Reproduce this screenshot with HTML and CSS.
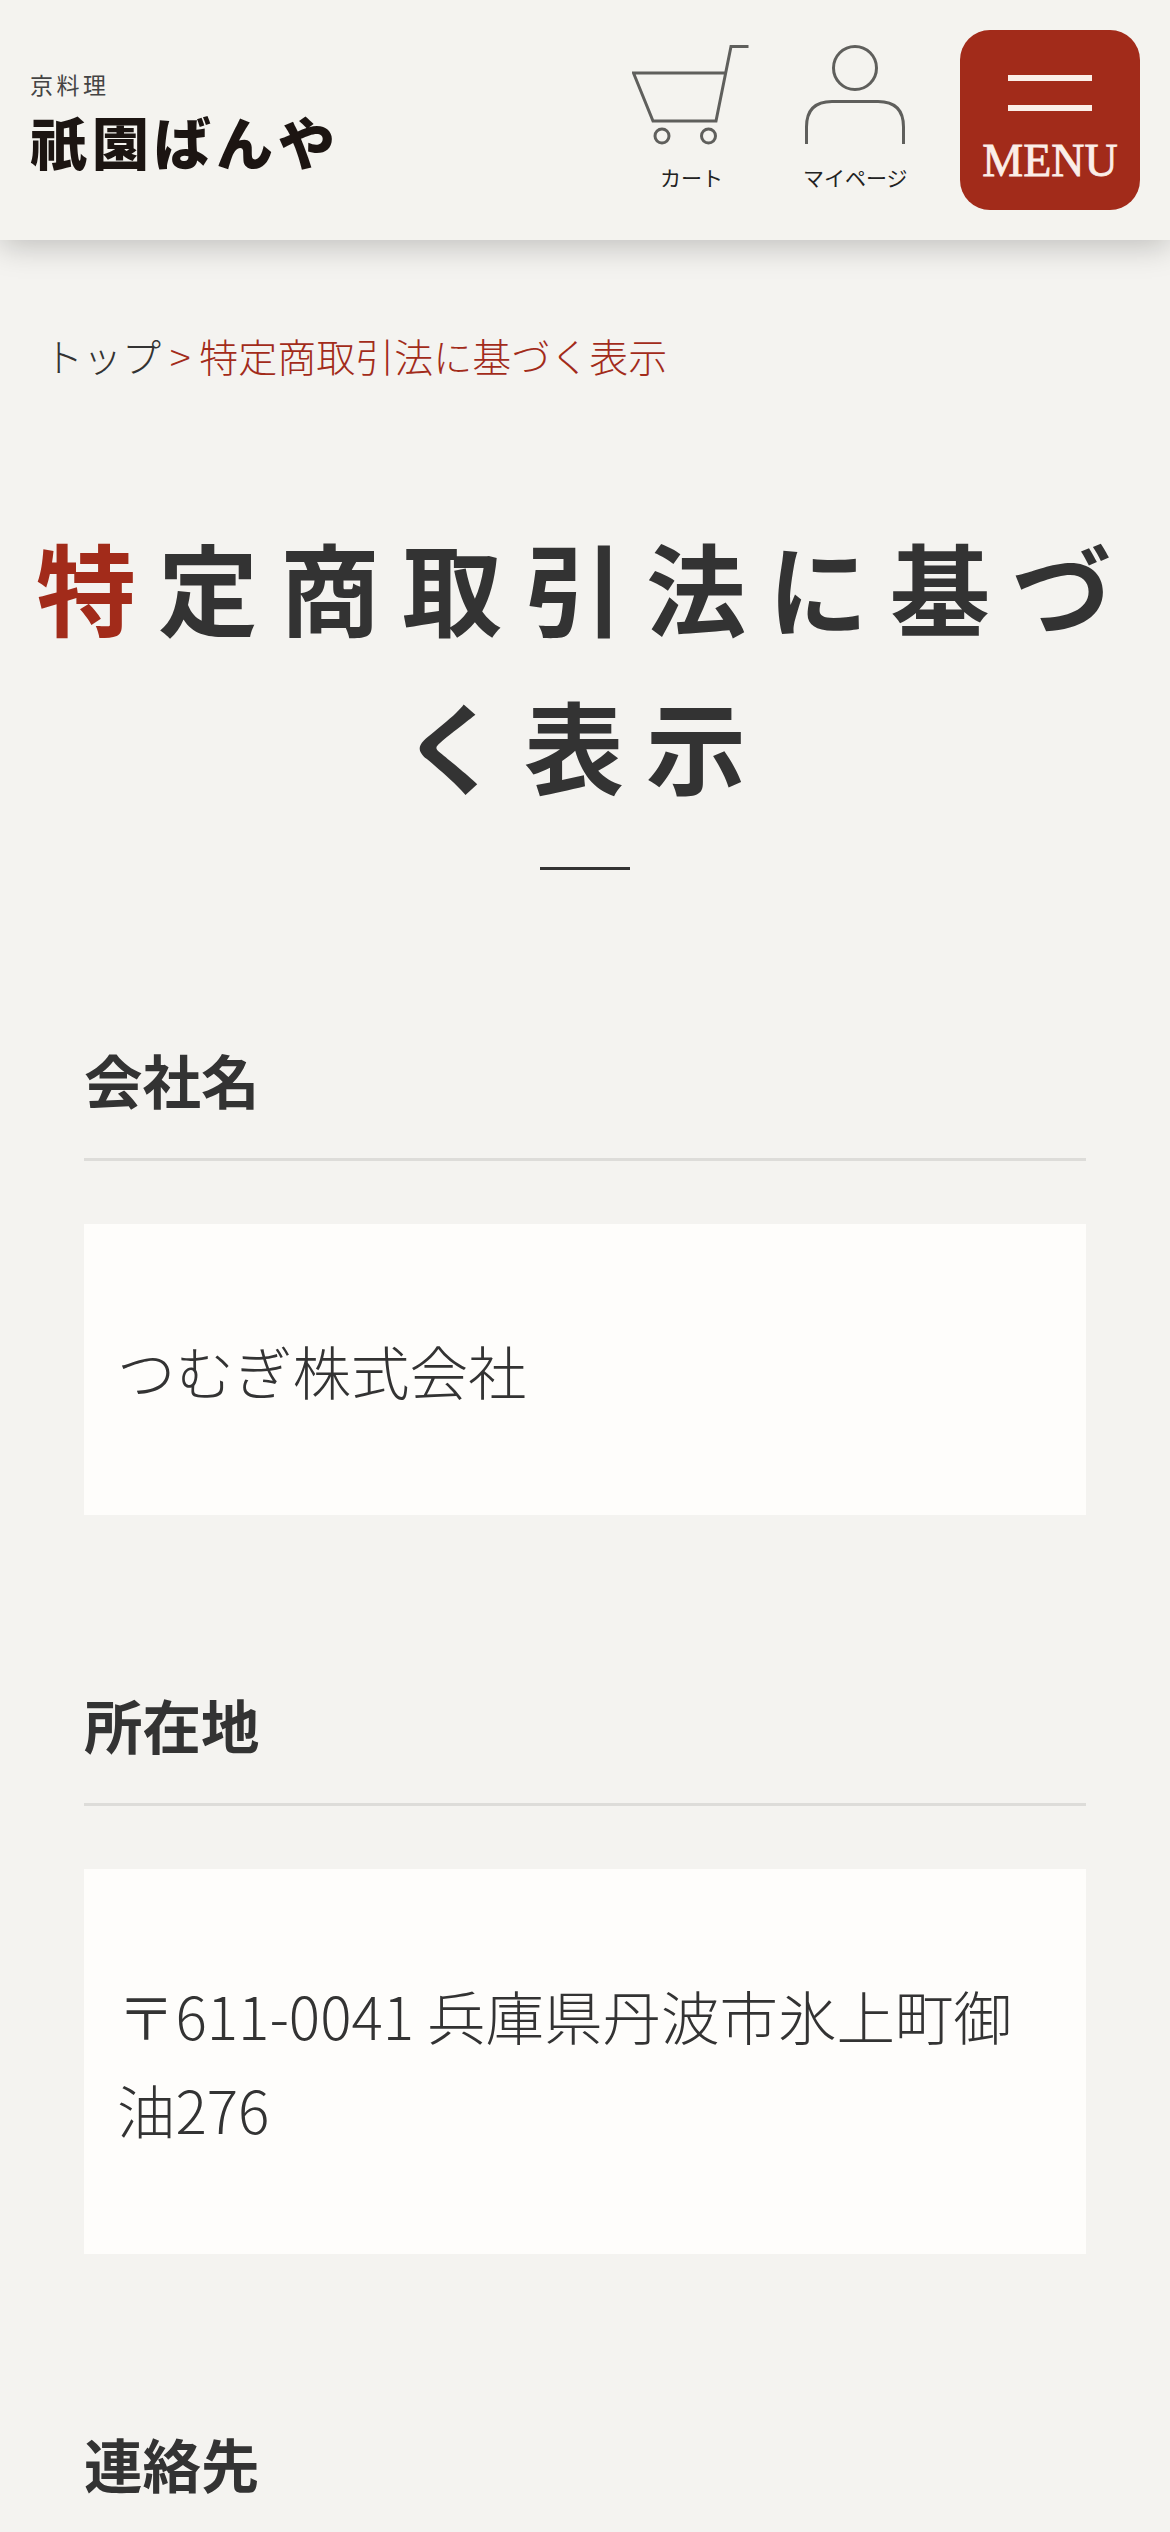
FILE: index.html
```html
<!DOCTYPE html>
<html lang="ja">
<head>
<meta charset="utf-8">
<title>特定商取引法に基づく表示</title>
<link rel="stylesheet" href="styles.css">
</head>
<body>
<header class="header">
  <a class="logo">
    <span class="logo-sub">京料理</span>
    <span class="logo-main">祇園ばんや</span>
  </a>
  <nav class="nav">
    <a class="nav-item">
      <svg class="nav-icon" width="118" height="100" viewBox="0 0 118 100" fill="none" stroke="#5f5f5c" stroke-width="3">
        <path d="M116.5 1.5H99L84 76H21L1.5 28H93"/>
        <circle cx="30" cy="91" r="7"/>
        <circle cx="76.5" cy="91" r="7"/>
      </svg>
      <span class="nav-label">カート</span>
    </a>
    <a class="nav-item">
      <svg class="nav-icon" width="102" height="100" viewBox="0 0 102 100" fill="none" stroke="#5f5f5c" stroke-width="3">
        <circle cx="51" cy="23" r="21.5"/>
        <path d="M2.5 99V82Q2.5 56.5 28 56.5H74Q99.5 56.5 99.5 82V99"/>
      </svg>
      <span class="nav-label">マイページ</span>
    </a>
    <a class="menu-btn">
      <span class="menu-bar"></span>
      <span class="menu-bar"></span>
      <span class="menu-text">MENU</span>
    </a>
  </nav>
</header>
<main>
  <p class="crumbs"><a class="crumb-top">トップ</a><span class="crumb-sep"> &gt; </span><span class="crumb-cur">特定商取引法に基づく表示</span></p>
  <h1 class="title"><span class="title-first">特</span>定商取引法に基づく表示</h1>
  <div class="title-rule"></div>
  <section class="sec">
    <h2 class="sec-head">会社名</h2>
    <div class="sec-body">つむぎ株式会社</div>
  </section>
  <section class="sec">
    <h2 class="sec-head">所在地</h2>
    <div class="sec-body">〒611-0041 兵庫県丹波市氷上町御油276</div>
  </section>
  <section class="sec">
    <h2 class="sec-head">連絡先</h2>
  </section>
</main>
</body>
</html>
```
FILE: styles.css
```css
* { box-sizing: border-box; }
html, body { margin: 0; padding: 0; }
body {
  background: #f4f3f0;
  color: #333;
  font-family: "Noto Sans CJK JP", "Noto Sans", sans-serif;
  height: 2532px;
  overflow: hidden;
}
.header {
  height: 240px;
  display: flex;
  justify-content: space-between;
  padding: 0 30px;
  background: #f4f3ef;
  box-shadow: 0 6px 30px rgba(0,0,0,.22);
  position: relative;
}
.logo { display: flex; flex-direction: column; padding-top: 69px; }
.logo-sub { font-size: 23px; line-height: 30px; letter-spacing: 3.5px; color: #444; font-weight: 400; }
.logo-main { font-size: 57px; line-height: 66px; font-weight: 900; color: #1c1512; margin-top: 8px; letter-spacing: 5px; white-space: nowrap; }
.nav { display: flex; align-items: flex-start; }
.nav-item { display: flex; flex-direction: column; align-items: center; margin-right: 52.5px; padding-top: 45px; }
.nav-label { font-size: 21px; line-height: 30px; margin-top: 17px; color: #222; white-space: nowrap; }
.menu-btn {
  width: 180px; height: 180px;
  margin-top: 30px;
  background: #a22b1a;
  border-radius: 30px;
  display: flex; flex-direction: column; align-items: center;
  padding-top: 45px;
}
.menu-bar { width: 84px; height: 6px; background: #fbeee8; margin-bottom: 24px; }
.menu-text { font-family: "Liberation Serif", serif; font-size: 46px; line-height: 46px; color: #fbeee8; margin-top: 3px; -webkit-text-stroke: .8px #fbeee8; }
.crumbs { margin: 0; padding: 88px 0 0 44px; font-size: 39px; line-height: 54px; font-weight: 300; white-space: nowrap; }
.crumb-sep, .crumb-cur { color: #a22b1a; }
.title {
  margin: 125px 30px 0;
  text-align: center;
  font-size: 100px;
  line-height: 158px;
  letter-spacing: 22px;
  font-weight: 700;
  color: #333;
}
.title-first { color: #a22b1a; }
.title-rule { width: 90px; height: 3px; background: #333; margin: 44px auto 0; }
.sec { margin: 169px 84px 0; }
.sec-head { margin: 0; font-size: 58.5px; line-height: 80px; font-weight: 700; color: #333; padding: 0 0 39px; border-bottom: 3px solid #dddcd9; }
.sec-body { margin-top: 63px; background: #fefdfb; padding: 98.5px 33px; font-size: 58.5px; line-height: 94px; font-weight: 300; }
```
